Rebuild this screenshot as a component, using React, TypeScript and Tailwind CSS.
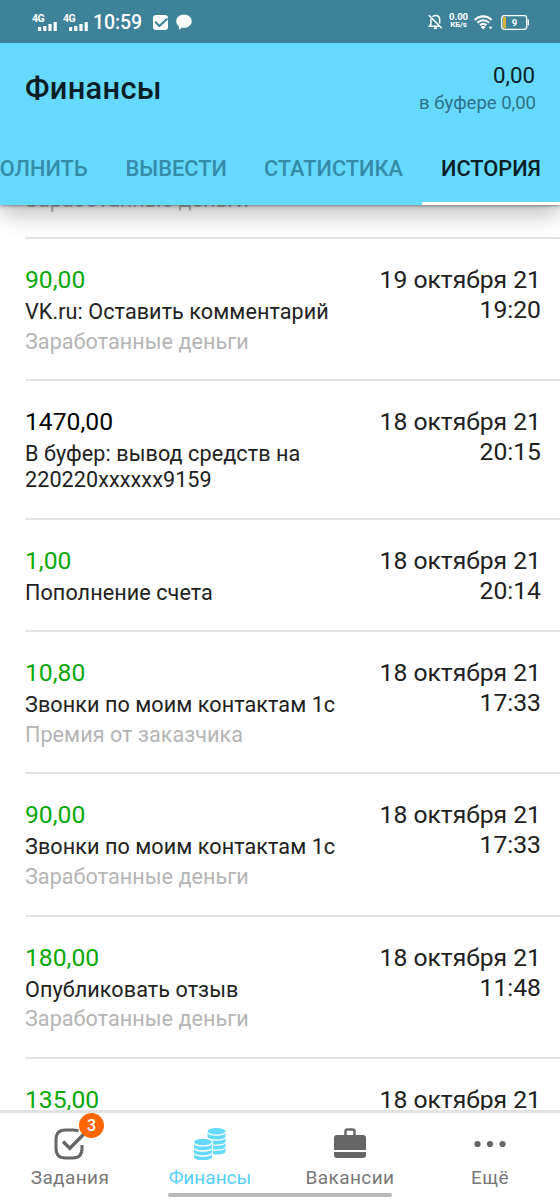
import { FC, ReactNode } from 'react'
import clsx from 'clsx'

interface Operation {
  id: number
  amount: string
  title: string
  note?: string
  date: string
  time: string
  outcome?: boolean
}

const operations: Operation[] = [
  { id: 1, amount: '90,00', title: 'Опубликовать отзыв', note: 'Заработанные деньги', date: '19 октября 21', time: '19:21' },
  { id: 2, amount: '90,00', title: 'VK.ru: Оставить комментарий', note: 'Заработанные деньги', date: '19 октября 21', time: '19:20' },
  { id: 3, amount: '1470,00', title: 'В буфер: вывод средств на 220220xxxxxx9159', date: '18 октября 21', time: '20:15', outcome: true },
  { id: 4, amount: '1,00', title: 'Пополнение счета', date: '18 октября 21', time: '20:14' },
  { id: 5, amount: '10,80', title: 'Звонки по моим контактам 1с', note: 'Премия от заказчика', date: '18 октября 21', time: '17:33' },
  { id: 6, amount: '90,00', title: 'Звонки по моим контактам 1с', note: 'Заработанные деньги', date: '18 октября 21', time: '17:33' },
  { id: 7, amount: '180,00', title: 'Опубликовать отзыв', note: 'Заработанные деньги', date: '18 октября 21', time: '11:48' },
  { id: 8, amount: '135,00', title: 'Опубликовать отзыв', note: 'Заработанные деньги', date: '18 октября 21', time: '11:47' },
]

const Signal: FC = () => (
  <div className="relative h-[17px] w-[25px]">
    <span className="absolute left-0 top-0 text-[10.5px] leading-[9px] font-bold tracking-[-0.5px]">4G</span>
    <svg className="absolute bottom-0 right-0" width="19" height="9" viewBox="0 0 19 9" fill="currentColor">
      <rect x="0" y="5" width="3.2" height="4" rx=".5" />
      <rect x="5.2" y="4" width="3.2" height="5" rx=".5" />
      <rect x="10.4" y="2" width="3.2" height="7" rx=".5" />
      <rect x="15.6" y="0" width="3.2" height="9" rx=".5" />
    </svg>
  </div>
)

const StatusBar: FC = () => (
  <div className="flex h-[43px] items-center justify-between bg-[#3d8299] pl-8 pr-[31px] text-white">

    <div className="flex items-center pt-px">
      <Signal />
      <div className="ml-1.5"><Signal /></div>
      <span className="ml-[5px] pt-px text-[19.5px] leading-6 font-medium tracking-[-0.1px]">10:59</span>
      <svg className="ml-[11px]" width="15" height="15" viewBox="0 0 15 15">
        <rect x="0" y="0" width="15" height="15" rx="3" fill="#fff" />
        <path d="M2.2 6.8 6.3 11 14.5 3.6" fill="none" stroke="#3d8299" strokeWidth="2" />
      </svg>
      <svg className="ml-2" width="16" height="16" viewBox="0 0 16 16" fill="currentColor">
        <path d="M8 .5c4.2 0 7.7 2.8 7.7 6.7S12.2 13.7 8 13.7c-.8 0-1.5-.1-2.2-.3-.6.9-1.6 1.7-2.8 2 .3-.9.3-2-.1-3C1.3 11.2.3 9.3.3 7.2.3 3.3 3.8.5 8 .5Z" />
      </svg>
    </div>

    <div className="flex items-center pt-px">
      <svg width="15" height="16" viewBox="0 0 15 16" fill="none" stroke="currentColor" strokeWidth="1.5">
        <path d="M4.5 2.8C5.3 2 6.3 1.6 7.5 1.6c2.5 0 4.2 1.9 4.2 4.4v3.5M2.9 5v5.2L1.4 12.3h10.2M.8 1.2l13 13" />
        <path d="M6 14.2h3" strokeWidth="1.8" />
      </svg>
      <div className="ml-1.5 -mt-0.5 flex w-[19px] flex-col items-center leading-[8.5px] font-bold">
        <span className="text-[9.5px]">0.00</span>
        <span className="text-[8px] tracking-[-0.2px]">КБ/s</span>
      </div>
      <svg className="ml-1.5" width="19" height="15" viewBox="0 0 19 15" fill="none" stroke="currentColor" strokeWidth="2.1">
        <path d="M.8 4.9C5.5.2 12.9.2 17.6 4.9M3.4 7.7c3.3-3.2 8.3-3.2 11.6 0M6 10.3c1.9-1.8 4.5-1.8 6.4 0" />
        <path d="m9.2 14.6-2.5-2.7c1.4-1.2 3.6-1.2 5 0Z" fill="currentColor" stroke="none" />
        <path d="M14.8 11.8h3.6l-1.8 2.6Z" fill="currentColor" stroke="none" />
      </svg>
      <svg className="ml-2" width="28" height="15" viewBox="0 0 28 15">
        <rect x=".7" y=".7" width="25" height="13.6" rx="2.5" fill="none" stroke="#fff" strokeWidth="1.3" />
        <rect x="2" y="2" width="3" height="11" fill="#d8b13c" />
        <path d="M27.2 4.5v6" stroke="#fff" strokeWidth="1.4" />
        <text x="13.5" y="11" textAnchor="middle" fill="#fff" fontSize="9.5" fontWeight="700">9</text>
      </svg>
    </div>

  </div>
)

const Header: FC = () => (
  <header className="relative z-10 h-[205px] shrink-0 bg-[#66d9ff] shadow-[0_1px_3px_rgba(0,0,0,0.4),0_8px_22px_rgba(0,0,0,0.28)]">

    <StatusBar />

    <div className="flex h-[89px] items-start justify-between pl-[25px] pr-6 pt-[18px]">
      <h1 className="mt-2.5 text-[30.8px] leading-9 font-medium tracking-[0.3px] text-[#0a1e25]">Финансы</h1>
      <div className="text-right">
        <p className="pr-px text-[22.3px] leading-7 text-[#0a1e25]">0,00</p>
        <p className="text-[18.5px] leading-[28px] text-[#2f7189]">в буфере 0,00</p>
      </div>
    </div>

    <nav className="flex h-[73px] justify-end overflow-hidden text-[21.8px] leading-[74px] font-medium whitespace-nowrap text-[#358ba8]">
      <span className="shrink-0 pr-[19px]">ПОПОЛНИТЬ</span>
      <span className="shrink-0 pl-[19px] pr-[18px]">ВЫВЕСТИ</span>
      <span className="shrink-0 px-[19px]">СТАТИСТИКА</span>
      <span className="w-[138px] shrink-0 border-b-[3px] border-white pl-[19px] text-[#0a1e25]">ИСТОРИЯ</span>
    </nav>

  </header>
)

const OperationRow: FC<{ operation: Operation }> = ({ operation }) => {

  const { amount, title, note, date, time, outcome } = operation

  return (
    <article className="ml-[25px] flex justify-between border-b-2 border-[#e4e4e4] pr-[19px] pt-[26px] pb-[24.6px]">

      <div className="w-[320px]">
        <h3 className={ clsx('text-[24.7px] leading-[30px]', outcome ? 'text-black' : 'text-[#0aa80a]') }>{ amount }</h3>
        <p className="mt-1 text-[21.6px] leading-[26px] tracking-[0.07px] text-[#212121]">{ title }</p>
        { note && <p className="mt-[3.5px] text-[21.6px] leading-[26px] tracking-[0.04px] text-[#b5b5b5]">{ note }</p> }
      </div>

      <div className="text-right text-[24.7px] leading-[30px] whitespace-nowrap text-[#212121]">
        <p>{ date }</p>
        <p>{ time }</p>
      </div>

    </article>
  )
}

interface TabProps {
  label: string
  active?: boolean
  children: ReactNode
}

const Tab: FC<TabProps> = ({ label, active, children }) => (
  <div className={ clsx('flex flex-1 flex-col items-center pt-[13px]', active ? 'text-[#66d9ff]' : 'text-[#666666]') }>
    <div className="flex h-9 items-center">{ children }</div>
    <span className={ clsx('mt-1 text-[19px] leading-6', active ? 'text-[#55d0f8]' : 'tracking-[0.4px] text-[#777777]') }>{ label }</span>
  </div>
)

const CoinStack: FC<{ x: number, y: number, count: number }> = ({ x, y, count }) => (
  <g transform={ `translate(${ x } ${ y })` }>
    <ellipse cx="9" cy="3.2" rx="9" ry="3.2" />
    { Array.from({ length: count }, (_, i) => (
      <path key={ i } d={ `M0 ${ 4.6 + i * 5 }c0 4.300 18 4.300 18 0v3.700c0 4.300-18 4.300-18 0Z` } />
    )) }
  </g>
)

const BottomNav: FC = () => (
  <footer className="relative z-10 h-[90px] shrink-0 border-t-[3px] border-[#e2e2e2] bg-white">

    <div className="flex">
      <Tab label="Задания">
        <div className="relative">
          <svg width="32" height="32" viewBox="0 0 32 32" fill="none" stroke="currentColor" strokeWidth="3">
            <path d="M24.500 2.900c-1.500-.4-3-.9-5-.9h-8C5 2 2 5 2 11.500v9C2 27 5 30 11.500 30h7c6.500 0 9.500-3 9.500-9.500V17" />
            <path d="m9 13.500 6.800 6.800L30 6" strokeWidth="3.4" />
          </svg>
          <span className="absolute -top-[15px] left-[25px] flex size-[25px] items-center justify-center rounded-full bg-[#ff6600] pt-px text-[16px] font-medium text-white">3</span>
        </div>
      </Tab>
      <Tab label="Финансы" active>
        <svg width="32" height="32" viewBox="0 0 32 32" fill="currentColor">
          <CoinStack x={ 13.5 } y={ 0 } count={ 4 } />
          {/* gap between the two stacks */}
          <path d="M-1 14c0-5.500 20-5.500 20 0v18H-1Z" fill="#fff" />
          <CoinStack x={ 0 } y={ 10.8 } count={ 3 } />
        </svg>
      </Tab>
      <Tab label="Вакансии">
        <svg width="32" height="32" viewBox="0 0 32 32">
          <path d="M11.5 8V3.5a2 2 0 0 1 2-2h5a2 2 0 0 1 2 2V8" fill="none" stroke="currentColor" strokeWidth="2.5" />
          <path d="M3 7h26a3 3 0 0 1 3 3v12H0V10a3 3 0 0 1 3-3ZM0 24h32v3a3 3 0 0 1-3 3H3a3 3 0 0 1-3-3Z" fill="currentColor" />
        </svg>
      </Tab>
      <Tab label="Ещё">
        <svg width="32" height="32" viewBox="0 0 32 32" fill="currentColor">
          <circle cx="3.5" cy="16" r="3.1" />
          <circle cx="16" cy="16" r="3.1" />
          <circle cx="28.5" cy="16" r="3.1" />
        </svg>
      </Tab>
    </div>

    <div className="mx-auto mt-[3px] h-1 w-[224px] rounded-full bg-[#b9b9b9]" />

  </footer>
)

export default function App() {
  return (
    <div className="flex h-[1200px] w-[560px] flex-col overflow-hidden bg-white font-[Roboto,sans-serif]">

      <Header />

      {/* the list is scrolled, its first row is mostly under the header */}
      <main className="min-h-0 flex-1">
        <div className="-mt-[108px]">
          { operations.map(operation => (
            <OperationRow key={ operation.id } operation={ operation } />
          )) }
        </div>
      </main>

      <BottomNav />

    </div>
  )
}
